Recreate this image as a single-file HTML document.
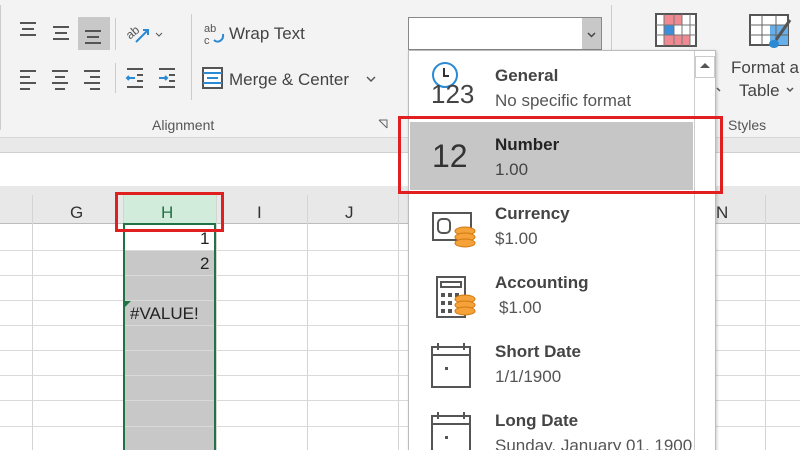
<!DOCTYPE html>
<html><head><meta charset="utf-8"><style>
*{margin:0;padding:0;box-sizing:border-box}
html,body{width:800px;height:450px;overflow:hidden}
body{position:relative;background:#fff;font-family:"Liberation Sans",sans-serif;color:#333}
.a{position:absolute}
.t{position:absolute;font-size:17px;color:#444;white-space:nowrap}
</style></head><body>
<div class="a" style="left:0;top:0;width:800px;height:138px;background:#f3f3f3;border-bottom:1px solid #d6d6d6"></div>
<div class="a" style="left:0;top:138px;width:800px;height:15px;background:#e9e9e9;border-bottom:1px solid #d0d0d0"></div>
<div class="a" style="left:0;top:153px;width:800px;height:33px;background:#fff"></div>
<div class="a" style="left:0;top:5px;width:1px;height:125px;background:#ccc"></div>
<div class="a" style="left:115px;top:18px;width:1px;height:32px;background:#ccc"></div>
<div class="a" style="left:115px;top:63px;width:1px;height:30px;background:#ccc"></div>
<div class="a" style="left:191px;top:14px;width:1px;height:86px;background:#ccc"></div>
<div class="a" style="left:611px;top:5px;width:1px;height:95px;background:#ccc"></div>
<div class="a" style="left:78px;top:17px;width:32px;height:33px;background:#c8c8c8"></div>
<svg class="a" style="left:0;top:0" width="400" height="140">
<g stroke="#555" stroke-width="2">
<path d="M20 23h16M22 29h12M20 35h16"/>
<path d="M53 27h16M55 33h12M53 39h16"/>
<path d="M85 31h16M87 37h12M85 43h16"/>
<path d="M20 71h16M20 77h10M20 83h16M20 89h10"/>
<path d="M52 71h16M55 77h10M52 83h16M55 89h10"/>
<path d="M84 71h16M90 77h10M84 83h16M90 89h10"/>
<path d="M127 69h16M137 75h6M137 81h6M127 87h16"/>
<path d="M159 69h16M169 75h6M169 81h6M159 87h16"/>
</g>
<g stroke="#2a8ad4" stroke-width="2" fill="none"><path d="M127 78h8M129 76l-2 2 2 2M159 78h8M165 76l2 2-2 2"/><path d="M136 42l12-12M143 30h5v5"/></g>
<text x="125" y="38" font-size="12" fill="#555" transform="rotate(-40 130 32)">ab</text>
<path d="M156 33l3 3 3-3" stroke="#555" fill="none"/>
<text x="204" y="32" font-size="11" fill="#555">ab</text><text x="204" y="44" font-size="11" fill="#555">c</text>
<path d="M214 40c4 4 10 0 9-6" stroke="#2a8ad4" stroke-width="2" fill="none"/>
<rect x="203" y="68" width="19" height="20" fill="#fff" stroke="#555" stroke-width="2"/>
<path d="M203 73h19M203 83h19" stroke="#2a8ad4" stroke-width="2"/><path d="M207 78h11" stroke="#2a8ad4" stroke-width="2"/>
<path d="M367 77l4 4 4-4" stroke="#555" fill="none" stroke-width="1.5"/>
<path d="M379 120h8v8M379 120l8 8" stroke="#666" fill="none"/>
</svg>
<div class="t" style="left:229px;top:24px">Wrap Text</div>
<div class="t" style="left:229px;top:70px">Merge &amp; Center</div>
<div class="t" style="left:152px;top:117px;font-size:14px;color:#555">Alignment</div>
<svg class="a" style="left:640px;top:0" width="160" height="110">
<rect x="16" y="14" width="40" height="32" fill="#fff" stroke="#555" stroke-width="2"/>
<rect x="24" y="15" width="18" height="10" fill="#f08a92"/><rect x="24" y="35" width="26" height="10" fill="#f08a92"/><rect x="24" y="25" width="10" height="10" fill="#3c8ed8"/>
<path d="M16 25h40M16 35h40M24 14v32M34 14v32M42 14v32M50 14v32" stroke="#777" stroke-width="1"/>
<rect x="110" y="15" width="38" height="30" fill="#fff" stroke="#555" stroke-width="2"/>
<rect x="130" y="25" width="18" height="20" fill="#68aee8"/>
<path d="M110 25h38M110 35h38M122 15v30M136 15v30" stroke="#666"/>
<path d="M150 20l-14 20" stroke="#555" stroke-width="3"/><ellipse cx="134" cy="44" rx="5" ry="4" fill="#2a8ad4"/>
<path d="M147 88l3 3 3-3" stroke="#555" fill="none" stroke-width="1.5"/>
<path d="M77 88l3 3" stroke="#555" fill="none" stroke-width="1.5"/>
</svg>
<div class="t" style="left:731px;top:58px">Format a</div>
<div class="t" style="left:739px;top:81px">Table</div>
<div class="t" style="left:728px;top:117px;font-size:14px;color:#555">Styles</div>
<div class="a" style="left:0;top:186px;width:800px;height:38px;background:#e8e8e8;border-bottom:1px solid #bcbcbc"></div>
<div class="a" style="left:123px;top:194px;width:93px;height:30px;background:#d2ecdc"></div>
<div class="a" style="left:32px;top:195px;width:1px;height:255px;background:#d4d4d4"></div>
<div class="a" style="left:123px;top:195px;width:1px;height:255px;background:#d4d4d4"></div>
<div class="a" style="left:216px;top:195px;width:1px;height:255px;background:#d4d4d4"></div>
<div class="a" style="left:307px;top:195px;width:1px;height:255px;background:#d4d4d4"></div>
<div class="a" style="left:398px;top:195px;width:1px;height:255px;background:#d4d4d4"></div>
<div class="a" style="left:765px;top:195px;width:1px;height:255px;background:#d4d4d4"></div>
<div class="t" style="left:70px;top:203px;color:#333">G</div>
<div class="t" style="left:161px;top:203px;color:#217346">H</div>
<div class="t" style="left:257px;top:203px;color:#333">I</div>
<div class="t" style="left:345px;top:203px;color:#333">J</div>
<div class="t" style="left:716px;top:203px;color:#333">N</div>
<div class="a" style="left:124px;top:250px;width:92px;height:200px;background:#c8c8c8"></div>
<div class="a" style="left:0;top:250px;width:800px;height:1px;background:#d9d9d9"></div>
<div class="a" style="left:0;top:275px;width:800px;height:1px;background:#d9d9d9"></div>
<div class="a" style="left:0;top:300px;width:800px;height:1px;background:#d9d9d9"></div>
<div class="a" style="left:0;top:325px;width:800px;height:1px;background:#d9d9d9"></div>
<div class="a" style="left:0;top:350px;width:800px;height:1px;background:#d9d9d9"></div>
<div class="a" style="left:0;top:375px;width:800px;height:1px;background:#d9d9d9"></div>
<div class="a" style="left:0;top:400px;width:800px;height:1px;background:#d9d9d9"></div>
<div class="a" style="left:0;top:426px;width:800px;height:1px;background:#d9d9d9"></div>
<div class="a" style="left:123px;top:223px;width:93px;height:240px;border:2px solid #217346"></div>
<div class="t" style="left:200px;top:229px;color:#222">1</div>
<div class="t" style="left:200px;top:254px;color:#222">2</div>
<div class="t" style="left:130px;top:304px;color:#222">#VALUE!</div>
<svg class="a" style="left:125px;top:301px" width="6" height="6"><path d="M0 0h6L0 6z" fill="#217346"/></svg>
<div class="a" style="left:115px;top:192px;width:109px;height:40px;border:3px solid #e02020"></div>
<div class="a" style="left:408px;top:17px;width:194px;height:33px;background:#fff;border:1px solid #888"></div>
<div class="a" style="left:582px;top:18px;width:19px;height:31px;background:#c8c8c8"></div>
<svg class="a" style="left:582px;top:18px" width="19" height="31"><path d="M6 15l3.5 3.5L13 15" stroke="#444" stroke-width="1.5" fill="none"/></svg>
<div class="a" style="left:408px;top:50px;width:308px;height:410px;background:#fff;border:1px solid #bbb;box-shadow:1px 1px 3px rgba(0,0,0,.2)"></div>
<div class="a" style="left:694px;top:51px;width:21px;height:400px;border-left:1px solid #ccc;background:#fff"></div>
<div class="a" style="left:695px;top:56px;width:20px;height:22px;border:1px solid #ccc"></div>
<svg class="a" style="left:698px;top:60px" width="14" height="10"><path d="M2 8l5-5 5 5z" fill="#555"/></svg>
<div class="a" style="left:410px;top:122px;width:283px;height:68px;background:#c6c6c6"></div>
<svg class="a" style="left:420px;top:55px" width="70" height="400">
<circle cx="25" cy="20" r="12" fill="none" stroke="#2a8ad4" stroke-width="2"/><path d="M24 13v8h5" stroke="#333" stroke-width="2" fill="none"/>
<g fill="none" stroke="#555" stroke-width="2">
<rect x="13" y="158" width="38" height="27"/><rect x="18" y="164" width="12" height="14" rx="4"/>
<rect x="17" y="222" width="28" height="40"/><rect x="21" y="227" width="20" height="5"/>
<path d="M12 292h38v40H12zM12 300h38M18 288v7M44 288v7"/>
<path d="M12 361h38v40H12zM12 369h38M18 357v7M44 357v7"/>
</g>
<g fill="#555"><rect x="21" y="238" width="4" height="4"/><rect x="28" y="238" width="4" height="4"/><rect x="35" y="238" width="4" height="4"/><rect x="21" y="246" width="4" height="4"/><rect x="28" y="246" width="4" height="4"/><rect x="21" y="254" width="4" height="4"/><rect x="28" y="254" width="4" height="4"/><rect x="25" y="312" width="3" height="3"/><rect x="25" y="381" width="3" height="3"/></g>
<g fill="#f5a23a" stroke="#d07a10"><ellipse cx="45" cy="176" rx="10" ry="4"/><ellipse cx="45" cy="182" rx="10" ry="4"/><ellipse cx="45" cy="188" rx="10" ry="4"/>
<ellipse cx="45" cy="244" rx="10" ry="4"/><ellipse cx="45" cy="250" rx="10" ry="4"/><ellipse cx="45" cy="256" rx="10" ry="4"/></g>
</svg>
<div class="t" style="left:431px;top:79px;font-size:26px">123</div>
<div class="t" style="left:432px;top:138px;font-size:32px;color:#333">12</div>
<div class="t" style="left:495px;top:66px;font-weight:bold">General</div>
<div class="t" style="left:495px;top:91px;color:#555">No specific format</div>
<div class="t" style="left:495px;top:135px;font-weight:bold;color:#222">Number</div>
<div class="t" style="left:495px;top:160px;color:#444">1.00</div>
<div class="t" style="left:495px;top:204px;font-weight:bold">Currency</div>
<div class="t" style="left:495px;top:229px;color:#555">$1.00</div>
<div class="t" style="left:495px;top:273px;font-weight:bold">Accounting</div>
<div class="t" style="left:499px;top:298px;color:#555">$1.00</div>
<div class="t" style="left:495px;top:342px;font-weight:bold">Short Date</div>
<div class="t" style="left:495px;top:367px;color:#555">1/1/1900</div>
<div class="t" style="left:495px;top:411px;font-weight:bold">Long Date</div>
<div class="t" style="left:495px;top:436px;color:#555">Sunday, January 01, 1900</div>
<div class="a" style="left:398px;top:116px;width:325px;height:78px;border:3px solid #e02020"></div>
</body></html>
